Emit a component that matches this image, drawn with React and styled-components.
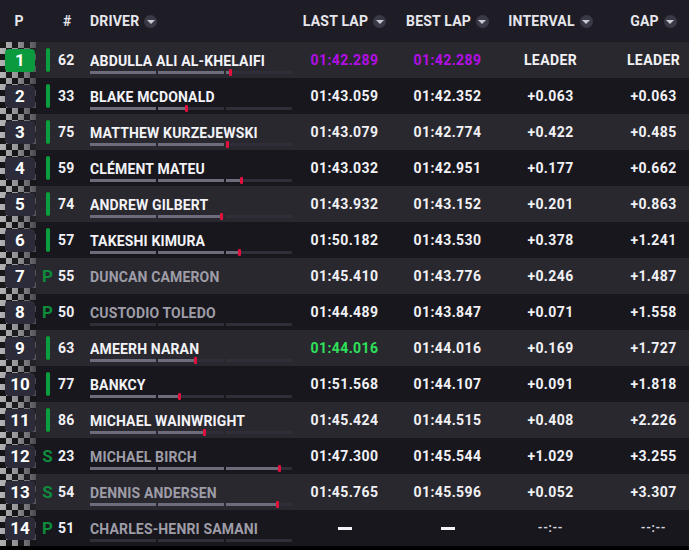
import React from "react";
import styled, { createGlobalStyle } from "styled-components";

const Global = createGlobalStyle`
  html, body { margin: 0; padding: 0; background: #000; }
  body { font-family: Roboto, "Open Sans", sans-serif; -webkit-font-smoothing: antialiased; }
`;

const Table = styled.div`
  width: 689px;
  display: flex;
  flex-direction: column;
  position: relative;
`;

const grid = `
  display: grid;
  grid-template-columns: 38px 52px 203px 103px 103px 103px 1fr;
  align-items: center;
`;

const Header = styled.div`
  ${grid}
  height: 42px;
  background: #1e1d25;
  color: #e6e6ec;
  font-weight: 700;
  font-size: 14px;
  letter-spacing: 0.2px;
`;

const HeadCell = styled.div`
  display: flex;
  align-items: center;
  gap: 5px;
  justify-content: ${(p) => (p.$align === "left" ? "flex-start" : "center")};
  padding-left: ${(p) => p.$pl || 0}px;
`;

const Caret = styled.span`
  width: 13px;
  height: 13px;
  border-radius: 50%;
  background: #3a3947;
  display: inline-flex;
  align-items: center;
  justify-content: center;
  &::after {
    content: "";
    width: 0;
    height: 0;
    border-left: 4px solid transparent;
    border-right: 4px solid transparent;
    border-top: 4px solid #c9c9d2;
    margin-top: 1px;
  }
`;

const Body = styled.div`
  display: flex;
  flex-direction: column;
  position: relative;
`;

const Flag = styled.div`
  position: absolute;
  left: 0;
  top: 0;
  bottom: 0;
  width: 36px;
  z-index: 1;
  background: repeating-conic-gradient(#d6d6d6 0 25%, #141414 0 50%) 0 0 / 12px 12px;
  -webkit-mask-image: linear-gradient(to right, rgba(0,0,0,0.95) 0%, rgba(0,0,0,0.75) 45%, rgba(0,0,0,0.3) 100%);
  mask-image: linear-gradient(to right, rgba(0,0,0,0.95) 0%, rgba(0,0,0,0.75) 45%, rgba(0,0,0,0.3) 100%);
  opacity: 0.85;
`;

const Row = styled.div`
  ${grid}
  height: 36px;
  background: ${(p) => (p.$odd ? "#29282f" : "#18171e")};
  color: #f1f1f5;
  font-weight: 700;
  font-size: 14px;
`;

const PosCell = styled.div`
  display: flex;
  justify-content: flex-end;
  padding-right: 3px;
`;

const Badge = styled.div`
  position: relative;
  z-index: 2;
  width: 30px;
  height: 23px;
  border-radius: 4px;
  background: ${(p) => (p.$leader ? "#0b9a3d" : "#2c2b39")};
  color: #fff;
  font-size: 17px;
  font-weight: 700;
  display: flex;
  align-items: center;
  justify-content: center;
`;

const NumCell = styled.div`
  display: flex;
  align-items: center;
  gap: 4px;
  padding-left: 3px;
`;

const Status = styled.div`
  width: 13px;
  height: 24px;
  display: flex;
  align-items: center;
  justify-content: center;
  color: #0f8c3c;
  font-size: 17px;
  font-weight: 700;
`;

const GreenBar = styled.div`
  width: 4px;
  height: 24px;
  border-radius: 2px;
  background: #0b9e3e;
`;

const CarNo = styled.span`
  font-size: 14px;
  letter-spacing: 0.3px;
`;

const NameCell = styled.div`
  align-self: stretch;
  display: flex;
  flex-direction: column;
  padding-top: 11px;
  box-sizing: border-box;
`;

const Name = styled.div`
  line-height: 16px;
  font-size: 14px;
  letter-spacing: 0.15px;
  white-space: nowrap;
  color: ${(p) => (p.$muted ? "#9e9da7" : "#f3f3f7")};
`;

const Track = styled.div`
  position: relative;
  margin-top: 2px;
  width: 202px;
  height: 3px;
  display: flex;
  gap: 2px;
`;

const Seg = styled.div`
  width: 66px;
  height: 3px;
  background: #2f2e39;
  position: relative;
  overflow: hidden;
`;

const SegFill = styled.div`
  height: 100%;
  background: #6d6c7d;
`;

const Marker = styled.div`
  position: absolute;
  top: -2px;
  width: 3px;
  height: 7px;
  border-radius: 1px;
  background: #e2103c;
`;

const TimeCell = styled.div`
  display: flex;
  justify-content: center;
  align-items: center;
  font-size: 14px;
  letter-spacing: 0.4px;
  padding-left: ${(p) => p.$pl || 0}px;
  color: ${(p) =>
    p.$tone === "purple" ? "#b40ee6" : p.$tone === "green" ? "#2ee05a" : "#f1f1f5"};
`;

const Dash = styled.span`
  display: inline-block;
  width: 14px;
  height: 3px;
  background: #f4f4f8;
`;

const Small = styled.span`
  font-size: 12px;
  letter-spacing: 0.6px;
  color: #d6d6de;
`;

const rows = [
  [1, "", "62", "ABDULLA ALI AL-KHELAIFI", ["01:42.289", "purple"], ["01:42.289", "purple"], "LEADER", "LEADER", 230],
  [2, "", "33", "BLAKE MCDONALD", ["01:43.059"], ["01:42.352"], "+0.063", "+0.063", 186],
  [3, "", "75", "MATTHEW KURZEJEWSKI", ["01:43.079"], ["01:42.774"], "+0.422", "+0.485", 227],
  [4, "", "59", "CLÉMENT MATEU", ["01:43.032"], ["01:42.951"], "+0.177", "+0.662", 241],
  [5, "", "74", "ANDREW GILBERT", ["01:43.932"], ["01:43.152"], "+0.201", "+0.863", 221],
  [6, "", "57", "TAKESHI KIMURA", ["01:50.182"], ["01:43.530"], "+0.378", "+1.241", 239],
  [7, "P", "55", "DUNCAN CAMERON", ["01:45.410"], ["01:43.776"], "+0.246", "+1.487", null],
  [8, "P", "50", "CUSTODIO TOLEDO", ["01:44.489"], ["01:43.847"], "+0.071", "+1.558", 0],
  [9, "", "63", "AMEERH NARAN", ["01:44.016", "green"], ["01:44.016"], "+0.169", "+1.727", 195],
  [10, "", "77", "BANKCY", ["01:51.568"], ["01:44.107"], "+0.091", "+1.818", 179],
  [11, "", "86", "MICHAEL WAINWRIGHT", ["01:45.424"], ["01:44.515"], "+0.408", "+2.226", 204],
  [12, "S", "23", "MICHAEL BIRCH", ["01:47.300"], ["01:45.544"], "+1.029", "+3.255", 279],
  [13, "S", "54", "DENNIS ANDERSEN", ["01:45.765"], ["01:45.596"], "+0.052", "+3.307", 277],
  [14, "P", "51", "CHARLES-HENRI SAMANI", [null], [null], null, null, 0],
];

function Progress({ marker }) {
  if (marker === null) return null;
  const p = marker ? marker - 90 : 0;
  return (
    <Track>
      {[0, 1, 2].map((i) => {
        const w = Math.max(0, Math.min(66, p - i * 68));
        return (
          <Seg key={i}>
            <SegFill style={{ width: w }} />
          </Seg>
        );
      })}
      {marker ? <Marker style={{ left: p - 1 }} /> : null}
    </Track>
  );
}

const lap = (v) => (v === null ? <Dash /> : v);
const diff = (v) => (v === null ? <Small>--:--</Small> : v);

export default function App() {
  return (
    <>
      <Global />
      <Table>
        <Header>
          <HeadCell>P</HeadCell>
          <HeadCell $align="left" $pl={25}>#</HeadCell>
          <HeadCell $align="left">DRIVER <Caret /></HeadCell>
          <HeadCell>LAST LAP <Caret /></HeadCell>
          <HeadCell>BEST LAP <Caret /></HeadCell>
          <HeadCell>INTERVAL <Caret /></HeadCell>
          <HeadCell $pl={16}>GAP <Caret /></HeadCell>
        </Header>
        <Body>
          <Flag />
          {rows.map(([pos, st, no, name, last, best, intv, gap, marker]) => (
            <Row key={pos} $odd={pos % 2 === 1}>
              <PosCell>
                <Badge $leader={pos === 1}>{pos}</Badge>
              </PosCell>
              <NumCell>
                <Status>{st ? st : <GreenBar />}</Status>
                <CarNo>{no}</CarNo>
              </NumCell>
              <NameCell>
                <Name $muted={!!st}>{name}</Name>
                <Progress marker={marker} />
              </NameCell>
              <TimeCell $tone={last[1]}>{lap(last[0])}</TimeCell>
              <TimeCell $tone={best[1]}>{lap(best[0])}</TimeCell>
              <TimeCell>{diff(intv)}</TimeCell>
              <TimeCell $pl={16}>{diff(gap)}</TimeCell>
            </Row>
          ))}
        </Body>
      </Table>
    </>
  );
}
